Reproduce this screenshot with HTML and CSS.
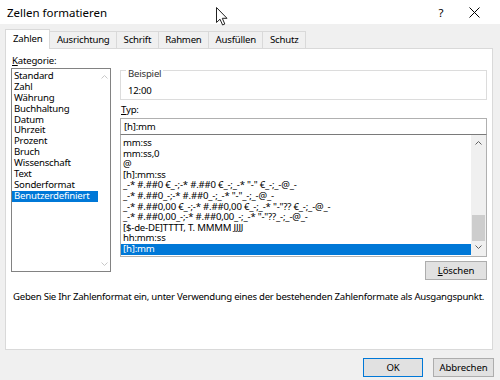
FILE: index.html
```html
<!DOCTYPE html>
<html lang="de">
<head>
<meta charset="utf-8">
<title>Zellen formatieren</title>
<link rel="stylesheet" href="styles.css">
</head>
<body>
<div class="dialog">
  <div class="titlebar">
    <span class="title">Zellen formatieren</span>
    <span class="tb-help">?</span>
    <span class="tb-close">
      <svg width="11" height="11" viewBox="0 0 11 11"><path d="M0.5 0.5 L10.5 10.5 M10.5 0.5 L0.5 10.5" stroke="#000" stroke-width="1" fill="none"/></svg>
    </span>
  </div>
  <div class="tabs">
    <div class="tab active">Zahlen</div>
    <div class="tab">Ausrichtung</div>
    <div class="tab">Schrift</div>
    <div class="tab">Rahmen</div>
    <div class="tab">Ausfüllen</div>
    <div class="tab">Schutz</div>
  </div>
  <div class="panel">
    <div class="cols">
      <div class="leftcol">
        <div class="label"><u>K</u>ategorie:</div>
        <div class="catlist">
          <div class="items">
            <div class="item">Standard</div>
            <div class="item">Zahl</div>
            <div class="item">Währung</div>
            <div class="item">Buchhaltung</div>
            <div class="item">Datum</div>
            <div class="item">Uhrzeit</div>
            <div class="item">Prozent</div>
            <div class="item">Bruch</div>
            <div class="item">Wissenschaft</div>
            <div class="item">Text</div>
            <div class="item">Sonderformat</div>
            <div class="item sel">Benutzerdefiniert</div>
          </div>
          <div class="vscroll disabled">
            <svg class="arrow" width="7" height="4" viewBox="0 0 7 4"><path d="M0.5 3.5 L3.5 0.5 L6.5 3.5" stroke="#c8c8c8" fill="none"/></svg>
            <svg class="arrow" width="7" height="4" viewBox="0 0 7 4"><path d="M0.5 0.5 L3.5 3.5 L6.5 0.5" stroke="#c8c8c8" fill="none"/></svg>
          </div>
        </div>
      </div>
      <div class="rightcol">
        <fieldset class="group">
          <legend>Beispiel</legend>
          <div class="sample">12:00</div>
        </fieldset>
        <div class="label typ"><u>T</u>yp:</div>
        <div class="input">[h]:mm</div>
        <div class="fmtlist">
          <div class="items">
            <div class="item">mm:ss</div>
            <div class="item">mm:ss,0</div>
            <div class="item">@</div>
            <div class="item">[h]:mm:ss</div>
            <div class="item">_-* #.##0 €_-;-* #.##0 €_-;_-* "-" €_-;_-@_-</div>
            <div class="item">_-* #.##0_-;-* #.##0_-;_-* "-"_-;_-@_-</div>
            <div class="item">_-* #.##0,00 €_-;-* #.##0,00 €_-;_-* "-"?? €_-;_-@_-</div>
            <div class="item">_-* #.##0,00_-;-* #.##0,00_-;_-* "-"??_-;_-@_-</div>
            <div class="item">[$-de-DE]TTTT, T. MMMM JJJJ</div>
            <div class="item">hh:mm:ss</div>
            <div class="item sel">[h]:mm</div>
          </div>
          <div class="vscroll">
            <svg class="arrow" width="7" height="4" viewBox="0 0 7 4"><path d="M0.5 3.5 L3.5 0.5 L6.5 3.5" stroke="#606060" fill="none"/></svg>
            <div class="track"><div class="thumb"></div></div>
            <svg class="arrow" width="7" height="4" viewBox="0 0 7 4"><path d="M0.5 0.5 L3.5 3.5 L6.5 0.5" stroke="#606060" fill="none"/></svg>
          </div>
        </div>
        <div class="btnrow">
          <button class="btn"><u>L</u>öschen</button>
        </div>
      </div>
    </div>
    <div class="desc">Geben Sie Ihr Zahlenformat ein, unter Verwendung eines der bestehenden Zahlenformate als Ausgangspunkt.</div>
  </div>
  <div class="footer">
    <button class="btn default">OK</button>
    <button class="btn">Abbrechen</button>
  </div>
</div>
<svg class="cursor" width="13" height="19" viewBox="0 0 13 19"><path d="M0.5 0.5 L0.5 15.5 L4 12.2 L6.6 18 L8.8 17 L6.3 11.3 L11 11.3 Z" fill="#fff" stroke="#222" stroke-width="1" stroke-linejoin="miter"/></svg>
</body>
</html>
```
FILE: styles.css
```css
* { box-sizing: border-box; }
html, body { margin: 0; padding: 0; }
body {
  width: 500px;
  height: 380px;
  overflow: hidden;
  background: #f0f0f0;
  font-family: "Noto Sans", "Open Sans", sans-serif;
  font-size: 9.6px;
  letter-spacing: -0.2px;
  color: #000;
  position: relative;
}
u { text-decoration: underline; text-underline-offset: 1px; }
.dialog { width: 500px; height: 380px; display: flex; flex-direction: column; }
.titlebar {
  height: 24px;
  background: #fff;
  display: flex;
  align-items: center;
  padding-left: 7px;
}
.title { font-size: 11.5px; letter-spacing: 0; flex: 1; }
.tb-help { font-size: 11.5px; width: 38px; text-align: center; margin-right: 4px; }
.tb-close { width: 20px; display: flex; justify-content: center; margin-right: 16px; }
.tabs {
  display: flex;
  align-items: flex-end;
  height: 24px;
  padding-left: 5px;
  padding-top: 5px;
}
.tab {
  height: 17px;
  line-height: 15px;
  padding: 0 6.5px;
  border: 1px solid #d9d9d9;
  border-bottom: none;
  background: #f0f0f0;
  margin-right: -1px;
}
.tab.active {
  height: 20px;
  line-height: 18px;
  padding: 0 7px;
  background: #fff;
  position: relative;
  z-index: 1;
  margin-bottom: -1px;
}
.panel {
  margin: 0 7px 0 5px;
  height: 302px;
  background: #fff;
  border: 1px solid #d9d9d9;
  padding: 5px 5px 0 5px;
  display: flex;
  flex-direction: column;
}
.cols { display: flex; gap: 9px; }
.leftcol { width: 100px; }
.rightcol { width: 367px; display: flex; flex-direction: column; }
.label { height: 14px; line-height: 14px; padding-left: 1px; }
.catlist {
  height: 204px;
  border: 1px solid #828282;
  display: flex;
}
.items { flex: 1; overflow: hidden; }
.catlist .items { padding-top: 2px; }
.item {
  height: 10.9px;
  line-height: 10.9px;
  padding-left: 2px;
  white-space: nowrap;
}
.item.sel { background: #0078d7; color: #fff; }
.vscroll {
  width: 14px;
  display: flex;
  flex-direction: column;
  align-items: center;
  justify-content: space-between;
  padding: 6px 0 5px;
}
.vscroll.disabled { width: 12px; }
.group {
  margin: 8px 0 0 0;
  border: 1px solid #dcdcdc;
  padding: 0 0 2px 7px;
  min-width: 0;
}
.group legend {
  padding: 6px 2px 0 2px;
  margin-left: -2px;
  line-height: 11px;
  color: #333;
}
.sample { line-height: 12px; margin-top: 6px; }
.label.typ { margin-top: 3px; height: 15px; line-height: 14px; }
.input {
  height: 16px;
  border: 1px solid #b0b0b0;
  border-bottom: none;
  line-height: 15px;
  padding-left: 3px;
}
.fmtlist {
  height: 123px;
  border: 1px solid #b0b0b0;
  border-top: 1px solid #7a7a7a;
  display: flex;
}
.fmtlist .items { padding-top: 3px; }
.fmtlist .item { height: 10.6px; line-height: 10.6px; }
.fmtlist .vscroll {
  width: 15px;
  background: #f0f0f0;
  padding: 6px 0 7px;
}
.track { flex: 1; width: 100%; display: flex; flex-direction: column; justify-content: flex-end; padding: 0 1px 4px; }
.thumb { height: 26px; background: #cdcdcd; }
.btnrow { display: flex; justify-content: flex-end; margin-top: 4px; }
.btn {
  font-family: inherit;
  font-size: 9.6px;
  letter-spacing: -0.1px;
  height: 19px;
  background: #e1e1e1;
  border: 1px solid #adadad;
  padding: 0;
  color: #000;
}
.btnrow .btn { width: 62px; }
.desc { margin-top: 10px; padding-left: 2px; line-height: 14px; white-space: nowrap; letter-spacing: -0.25px; }
.footer {
  display: flex;
  justify-content: flex-end;
  gap: 10px;
  padding: 8px 6px 0 0;
}
.footer .btn { width: 61px; height: 19px; }
.footer .btn.default { width: 60px; border: 1px solid #0078d7; }
.cursor { position: absolute; left: 216px; top: 7px; }
```
